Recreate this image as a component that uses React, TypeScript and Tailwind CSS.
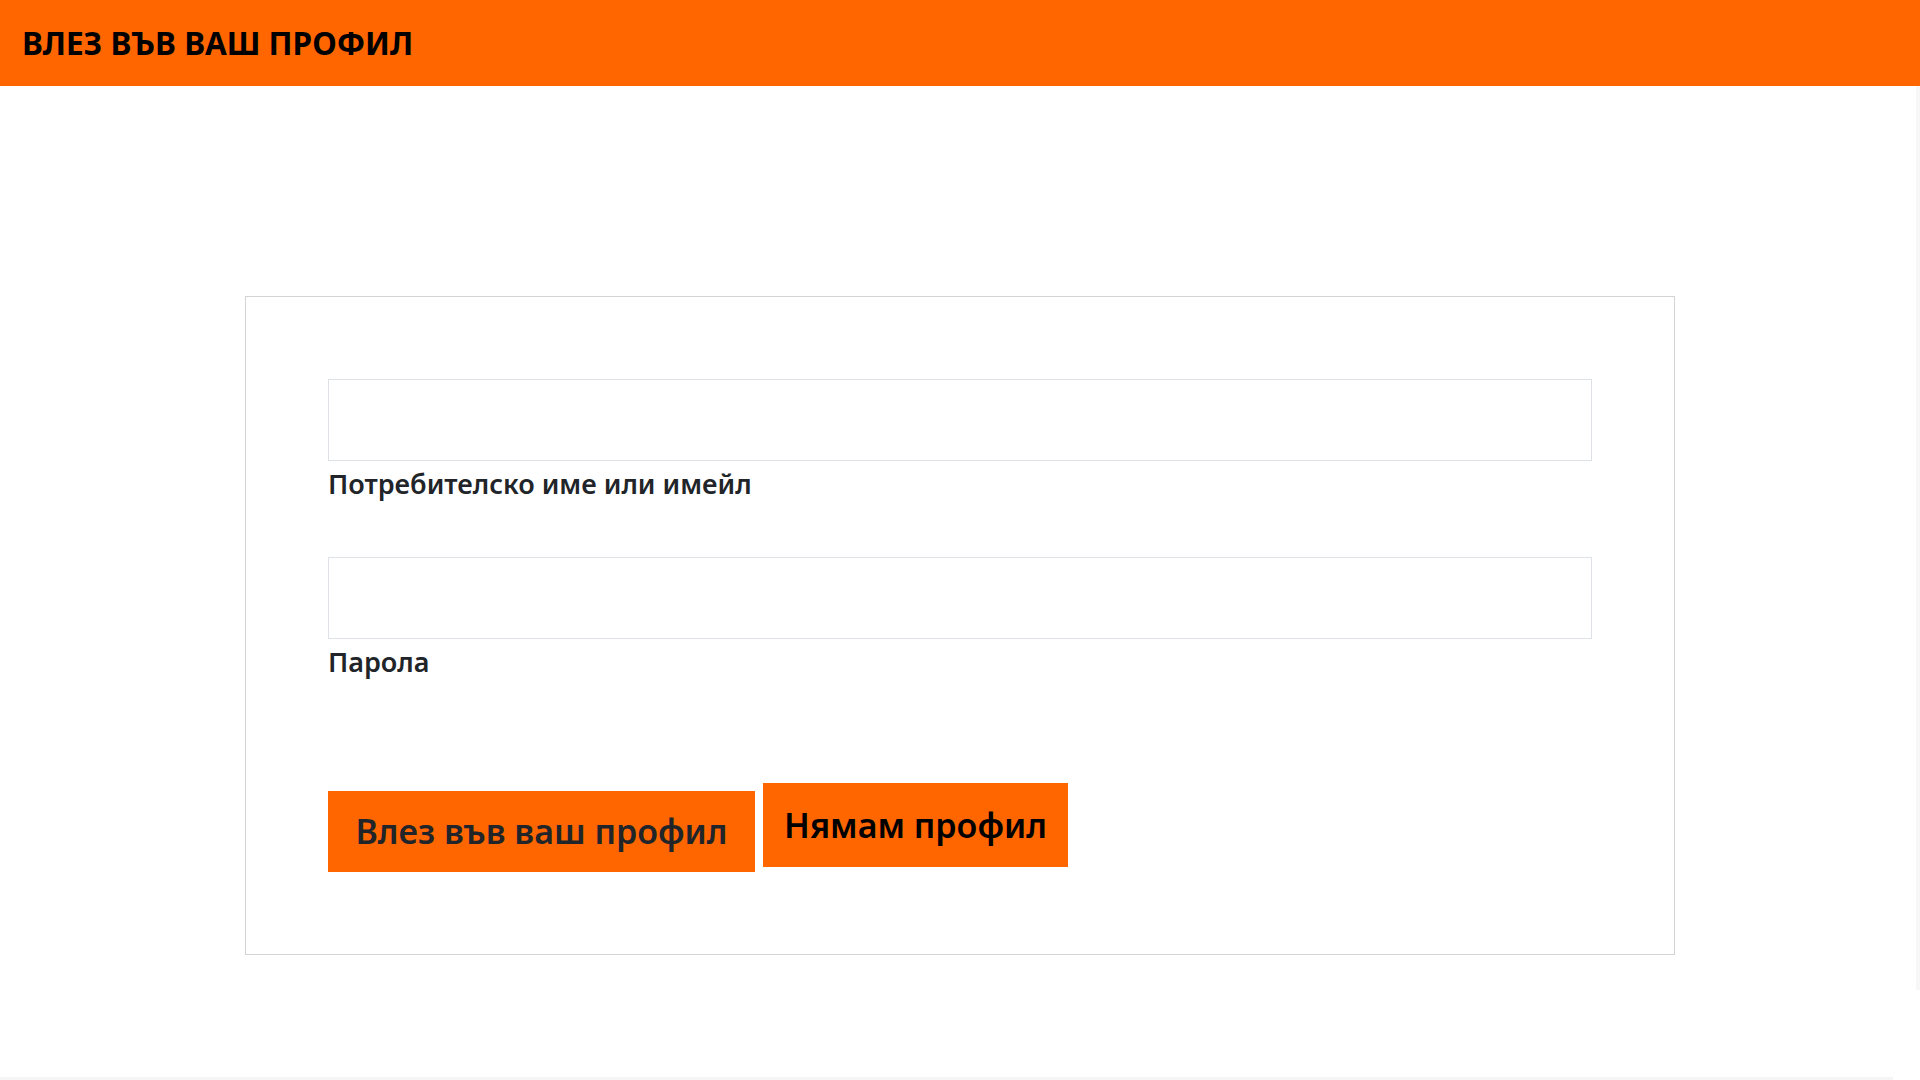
import React from 'react';

const font = { fontFamily: '"Noto Sans", "DejaVu Sans", sans-serif' };

export default function App() {
  return (
    <div className="flex h-screen flex-col overflow-hidden bg-white" style={font}>
      <header className="flex h-[86px] shrink-0 items-center bg-[#ff6600] px-[22px]">
        <h1 className="text-[31.5px] font-bold text-black">ВЛЕЗ ВЪВ ВАШ ПРОФИЛ</h1>
      </header>

      <div className="flex flex-1">
        <main className="flex-1 pt-[210px]">
          <form
            className="ml-[245px] w-[1430px] border border-[#d4d4d4] p-[82px]"
            onSubmit={(e) => e.preventDefault()}
          >
            <div className="flex flex-col">
              <input
                type="text"
                className="h-[82px] w-full border border-[#dee2e6] px-4 text-xl focus:outline-none"
              />
              <label className="h-[36px] text-[27px] leading-[46px] font-semibold text-[#212529]">
                Потребителско име или имейл
              </label>
            </div>

            <div className="mt-[60px] flex flex-col">
              <input
                type="password"
                className="h-[82px] w-full border border-[#dee2e6] px-4 text-xl focus:outline-none"
              />
              <label className="h-[36px] text-[27px] leading-[46px] font-semibold text-[#212529]">
                Парола
              </label>
            </div>

            <div className="mt-[108px] flex items-start gap-[8px]">
              <button
                type="submit"
                className="mt-[8px] h-[81px] w-[427px] bg-[#ff6600] text-[34px] font-semibold text-[#212529]"
              >
                Влез във ваш профил
              </button>
              <button type="button" className="h-[84px] w-[305px] bg-[#ff6600] text-[34px] font-semibold text-black">
                Нямам профил
              </button>
            </div>
          </form>
        </main>
        <div className="h-[904px] w-[4px] bg-[#f7f7f7]" />
      </div>
      <div className="h-[3px] w-[1893px] shrink-0 bg-[#f5f5f5]" />
    </div>
  );
}
